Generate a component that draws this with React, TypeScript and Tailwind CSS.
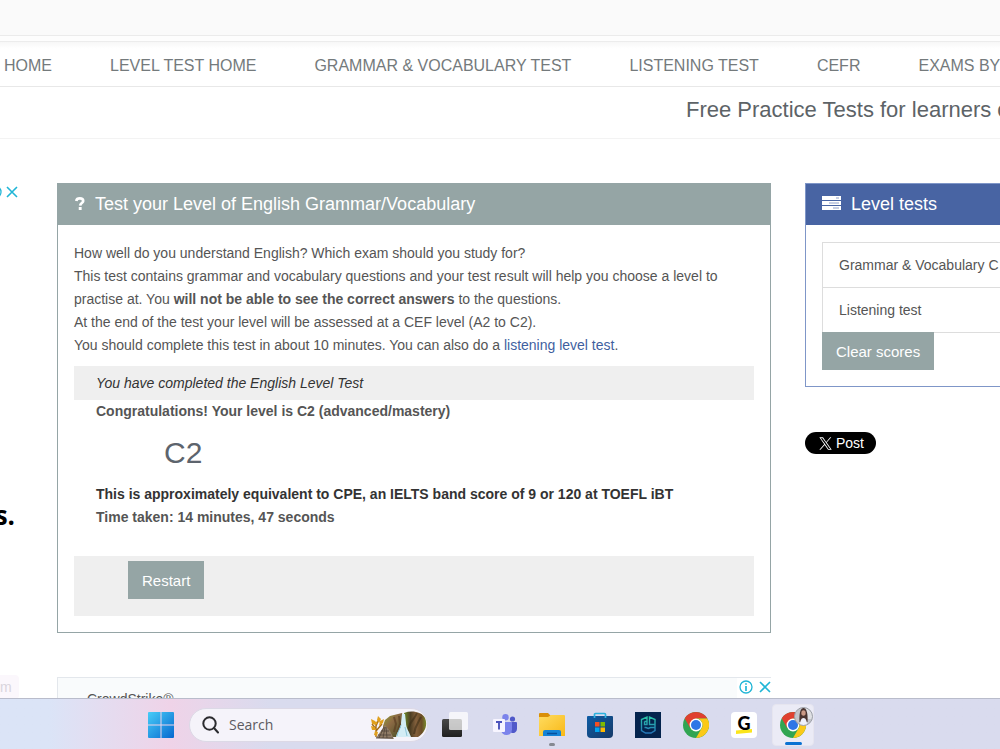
import type { ReactNode } from 'react'

const navItems = [
  'HOME',
  'LEVEL TEST HOME',
  'GRAMMAR & VOCABULARY TEST',
  'LISTENING TEST',
  'CEFR',
  'EXAMS BY',
]

function CloseIcon() {
  return (
    <svg width="12" height="12" viewBox="0 0 12 12" fill="none" stroke="#1fb5d6" strokeWidth="1.6">
      <path d="M1 1l10 10M11 1L1 11" />
    </svg>
  )
}

function InfoIcon() {
  return (
    <svg width="14" height="14" viewBox="0 0 14 14" fill="none" stroke="#1fb5d6">
      <circle cx="7" cy="7" r="6" strokeWidth="1.3" />
      <path d="M7 6v5M7 3.2v1.6" strokeWidth="1.7" />
    </svg>
  )
}

function QuestionIcon() {
  return (
    <svg width="10" height="13" viewBox="0 0 10 13" fill="none" stroke="#fff">
      <path d="M1.3 4C1.5 2.2 3 1.4 4.8 1.4c2 0 3.4 1 3.4 2.5C8.2 6 5.3 6 5.2 8.6" strokeWidth="2.7" />
      <path d="M5.2 10v3" strokeWidth="2.9" />
    </svg>
  )
}

function ServerIcon() {
  return (
    <svg width="19" height="15" viewBox="0 0 19 15">
      <path d="M0 0h19v4H0zM0 5h19v4H0zM0 10h19v4H0z" fill="#fff" />
      <path d="M14 2h3M7 7h10M11 12h6" stroke="#8e9fc9" />
    </svg>
  )
}

function WindowsIcon() {
  return (
    <svg width="26" height="26" viewBox="0 0 26 26">
      <defs>
        <linearGradient id="win" x1="0" y1="0" x2="26" y2="26" gradientUnits="userSpaceOnUse">
          <stop offset="0" stopColor="#48cdf8" />
          <stop offset="1" stopColor="#0668cf" />
        </linearGradient>
      </defs>
      <path
        d="M1 0h11.5v12.5H0V1a1 1 0 0 1 1-1zM13.5 0H25a1 1 0 0 1 1 1v11.5H13.5zM0 13.5h12.5V26H1a1 1 0 0 1-1-1zM13.5 13.5H26V25a1 1 0 0 1-1 1H13.5z"
        fill="url(#win)"
      />
    </svg>
  )
}

function WaterfallArt() {
  return (
    <svg width="56" height="28" viewBox="0 0 56 28">
      <defs>
        <linearGradient id="cliff" x1="0" y1="0" x2="1" y2="0">
          <stop offset="0" stopColor="#6d8f2c" />
          <stop offset=".3" stopColor="#4f3f24" />
          <stop offset=".55" stopColor="#84603c" />
          <stop offset=".8" stopColor="#6a4c26" />
          <stop offset="1" stopColor="#7a8a2e" />
        </linearGradient>
        <linearGradient id="rocks" x1="0" y1="0" x2="1" y2="1">
          <stop offset="0" stopColor="#93a236" />
          <stop offset=".4" stopColor="#8c6a45" />
          <stop offset="1" stopColor="#3f4d20" />
        </linearGradient>
      </defs>
      <path d="M12 15l2-6 5-4 12-3 2 6-2 11-4 7H12z" fill="url(#rocks)" />
      <path d="M23 6l2 7-2 8M28 5l1 8-3 9" stroke="#5b3e24" strokeWidth="2" fill="none" opacity=".7" />
      <path d="M33 2C41-1 51 1 54 7c3 7 0 15-7 19H36l-3-8c-1-6 1-10 0-16z" fill="url(#cliff)" />
      <path d="M46 2c-2 5-5 7-7 11s-2 7-2 10M50 6c-3 6-6 9-7 17" stroke="#3a2b15" strokeWidth="2" fill="none" opacity=".55" />
      <path d="M31 3h3l1 9c0 5 3 8 5 14H25c1-6 6-9 5-14z" fill="#d3edf5" />
      <path d="M30 14c-1 4-3 6-4 11M34 16l2 9" stroke="#8cc4d8" fill="none" />
      <path d="M5 27L14 14l5 6 4 8z" fill="#917c66" />
      <path d="M8 27l5-11M12 27l2-11M16 27l-1-11M7 24h13M10 20h8M5 27h17" stroke="#51453a" fill="none" opacity=".8" />
      <path d="M5 26L5 12M5 18l-4-5M5 20l6-7M5 15l3-7" stroke="#a36a17" strokeWidth="1.4" fill="none" />
      <g fill="#e0a01e">
        <path d="M0 8l4 2 1 4-4-1zM7 5l3 3-2 4-2-3zM9 10l4-2-1 4-4 3zM0 15l4 1 1 3-4 0zM4 20l3 1-1 4-3-1z" />
        <circle cx="5" cy="12" r="1.4" />
      </g>
    </svg>
  )
}

function TaskViewIcon() {
  return (
    <svg width="32" height="26" viewBox="0 0 32 26">
      <defs>
        <linearGradient id="tv" x1="0" y1="0" x2="0" y2="1">
          <stop offset="0" stopColor="#484848" />
          <stop offset="1" stopColor="#202020" />
        </linearGradient>
      </defs>
      <rect x="2" y="7" width="20" height="18" rx="1.5" fill="url(#tv)" />
      <rect x="9" y="0" width="19" height="18" rx="1.5" fill="#fff" opacity=".72" />
    </svg>
  )
}

function TeamsIcon() {
  return (
    <svg width="25" height="22" viewBox="0 0 25 22">
      <circle cx="20.5" cy="5" r="2.6" fill="#5059c9" />
      <circle cx="13.5" cy="3.2" r="3.2" fill="#7b83eb" />
      <path d="M17 8h7a1 1 0 0 1 1 1v6a4 4 0 0 1-6 3.5z" fill="#5059c9" />
      <path d="M9 8h11v7.5a5.5 5.5 0 0 1-11 0z" fill="#7b83eb" />
      <rect x="1" y="5" width="12" height="13" rx="1" fill="#f7f5ff" />
      <path d="M4 8h6M7 8v7.5" stroke="#4b53bc" strokeWidth="1.9" />
    </svg>
  )
}

function FolderIcon() {
  return (
    <svg width="26" height="24" viewBox="0 0 26 24">
      <defs>
        <linearGradient id="folder" x1="0" y1="0" x2="1" y2="1">
          <stop offset="0" stopColor="#ffdc60" />
          <stop offset="1" stopColor="#f8b817" />
        </linearGradient>
      </defs>
      <path d="M1 0h8l3 3h-1v4H0V1a1 1 0 0 1 1-1z" fill="#d98f08" />
      <path d="M0 4h9l3-2h13a1 1 0 0 1 1 1v20H0z" fill="url(#folder)" />
      <path d="M4 23v-4a2 2 0 0 1 2-2h14a2 2 0 0 1 2 2v4z" fill="#1583d6" />
      <path d="M8 20.500h10" stroke="#064f9c" strokeWidth="1.5" />
    </svg>
  )
}

function StoreIcon() {
  return (
    <svg width="26" height="26" viewBox="0 0 26 26">
      <defs>
        <linearGradient id="store" x1="0" y1="0" x2="1" y2="1">
          <stop offset="0" stopColor="#0d5ca5" />
          <stop offset="1" stopColor="#173a68" />
        </linearGradient>
      </defs>
      <path d="M0 5a1 1 0 0 1 1-1h24a1 1 0 0 1 1 1v17a4 4 0 0 1-4 4H4a4 4 0 0 1-4-4z" fill="url(#store)" />
      <path d="M7.5 6V2.500a1 1 0 0 1 1-1h9a1 1 0 0 1 1 1V6" fill="none" stroke="#2bb1dd" strokeWidth="1.7" />
      <path d="M8 10h4.500v4.500H8z" fill="#f25022" />
      <path d="M13.500 10H18v4.500h-4.500z" fill="#7fba00" />
      <path d="M8 15.500h4.500V20H8z" fill="#00a4ef" />
      <path d="M13.500 15.500H18V20h-4.500z" fill="#ffb900" />
    </svg>
  )
}

function ShieldAppIcon() {
  return (
    <svg width="26" height="26" viewBox="0 0 26 26">
      <defs>
        <linearGradient id="mask" x1="0" y1="0" x2="0" y2="26" gradientUnits="userSpaceOnUse">
          <stop offset=".2" stopColor="#2bc4a8" />
          <stop offset=".8" stopColor="#2475b8" />
        </linearGradient>
      </defs>
      <path d="M0 0h26v26H0z" fill="#04234d" />
      <path
        d="M6.500 16.500V7.500L12 5v7.500H9.500V9.500M20 16.500V7.500L14.500 5v7.500H20M9.500 9.500H12M6.500 14v4.500l4 2.500h5.500l4-2.500V14M9.500 15.500h1.500l2.300 1 2.200-1H20"
        fill="none"
        stroke="url(#mask)"
        strokeWidth="1.4"
      />
    </svg>
  )
}

function GIcon() {
  return (
    <span className="relative flex size-[26px] items-center justify-center rounded bg-white font-[Lato,sans-serif] text-lg font-black leading-5 text-black">
      <svg className="absolute bottom-1 left-[5px]" width="16" height="5" viewBox="0 0 16 5">
        <path d="M0 1.500L16 0v3.500L0 5z" fill="#fbe51c" />
      </svg>
      <span className="relative -mt-1">G</span>
    </span>
  )
}

function ChromeIcon() {
  return (
    <svg width="26" height="26" viewBox="0 0 26 26">
      <circle cx="13" cy="13" r="13" fill="#31a552" />
      <path d="M13 0a13 13 0 0 1 11.260 6.500H13L7.370 16.250 1.740 6.500A13 13 0 0 1 13 0z" fill="#e0402f" />
      <path d="M24.260 6.500A13 13 0 0 1 13 26l5.630-9.750A6.500 6.500 0 0 0 13 6.500z" fill="#fbc918" />
      <circle cx="13" cy="13" r="6.400" fill="#fff" />
      <circle cx="13" cy="13" r="5" fill="#2e76e6" />
    </svg>
  )
}

function AvatarBadge() {
  return (
    <svg className="absolute left-[21px] top-0.5" width="19" height="19" viewBox="0 0 19 19">
      <clipPath id="face">
        <circle cx="9.5" cy="9.5" r="9" />
      </clipPath>
      <g clipPath="url(#face)">
        <path d="M0 0h19v19H0z" fill="#c3c5ca" />
        <path d="M12 0h7v12h-7z" fill="#dfe0e3" />
        <path d="M5.500 15C5 8 6 1 9.500 1S14 8 13.500 15z" fill="#4a3530" />
        <ellipse cx="9.500" cy="6" rx="2.200" ry="2.800" fill="#cb9a85" />
        <path d="M6 19c0-5 1-8 3.500-8s3.500 3 3.500 8z" fill="#eef0fa" />
      </g>
      <circle cx="9.5" cy="9.5" r="9" fill="none" stroke="#9da0a8" />
    </svg>
  )
}

function TaskButton({ label, children }: { label: string; children: ReactNode }) {
  return (
    <button aria-label={label} className="relative flex h-[42px] w-12 shrink-0 items-center justify-center">
      {children}
    </button>
  )
}

function Taskbar() {
  return (
    <footer className="flex h-[51px] shrink-0 items-center border-t border-[#b9bccb] bg-linear-to-r from-[#dbe4f7] from-5% via-[#efd3e8] via-17% to-[#d9dbee] to-27% pl-[148px] pt-px">
      <button aria-label="Start" className="shrink-0">
        <WindowsIcon />
      </button>
      <label className="ml-[15px] flex h-[34px] w-[239px] shrink-0 items-center rounded-full border border-[#dcd9e6] bg-[#f5f3fa] pl-3">
        <svg width="17" height="18" viewBox="0 0 17 18" fill="none" stroke="#2b2b2f" strokeWidth="2">
          <circle cx="7.5" cy="7.5" r="6.2" />
          <path d="M12 12l4 4.500" strokeLinecap="round" />
        </svg>
        <input
          aria-label="Search"
          placeholder="Search"
          className="ml-2.5 w-0 min-w-0 flex-1 bg-transparent font-['Open_Sans',sans-serif] text-sm text-[#5c5a61] outline-none placeholder:text-[#5c5a61]"
        />
        <WaterfallArt />
      </label>
      <div className="flex flex-1 items-center pl-1">
        <TaskButton label="Task view">
          <TaskViewIcon />
        </TaskButton>
        <TaskButton label="Teams">
          <TeamsIcon />
        </TaskButton>
        <TaskButton label="File Explorer">
          <FolderIcon />
          <span className="absolute bottom-0 h-[3px] w-1.5 rounded-full bg-[#858992]" />
        </TaskButton>
        <TaskButton label="Store">
          <StoreIcon />
        </TaskButton>
        <TaskButton label="Shield">
          <ShieldAppIcon />
        </TaskButton>
        <TaskButton label="Chrome">
          <ChromeIcon />
        </TaskButton>
        <TaskButton label="G">
          <GIcon />
        </TaskButton>
        <button
          aria-label="Chrome profile"
          className="relative ml-1 flex h-[42px] w-[42px] shrink-0 items-center rounded border border-[#e6e5ef] bg-[#ebebf6] pl-[7px]"
        >
          <ChromeIcon />
          <AvatarBadge />
          <span className="absolute bottom-0 left-3 h-[3px] w-[17px] rounded-full bg-[#0a72d2]" />
        </button>
      </div>
    </footer>
  )
}

function SideAd() {
  return (
    <aside className="flex w-[57px] shrink-0 flex-col overflow-hidden">
      <div className="flex w-[18px] items-center justify-end gap-1 pt-0.5">
        <span className="shrink-0">
          <InfoIcon />
        </span>
        <span className="shrink-0">
          <CloseIcon />
        </span>
      </div>
      <p className="mt-[298px] flex w-[15px] justify-end font-['Open_Sans',sans-serif] text-[26px] font-bold leading-9 text-black">
        s.
      </p>
      <p className="mt-[142px] w-[19px] rounded-r bg-[#fbf7fc] pr-2 text-right text-sm leading-6 text-[#d9d5dc]">m</p>
    </aside>
  )
}

function TestPanel() {
  return (
    <section className="border border-[#95a5a6]">
      <h2 className="flex h-[41px] items-center bg-[#95a5a5] pb-0.5 pl-[17px] text-lg text-white">
        <QuestionIcon />
        <span className="ml-2.5">Test your Level of English Grammar/Vocabulary</span>
      </h2>
      <div className="px-4 pb-4 pt-[17px]">
        <p>How well do you understand English? Which exam should you study for?</p>
        <p>
          This test contains grammar and vocabulary questions and your test result will help you choose a level to
          practise at. You <b>will not be able to see the correct answers</b> to the questions.
        </p>
        <p>At the end of the test your level will be assessed at a CEF level (A2 to C2).</p>
        <p>
          You should complete this test in about 10 minutes. You can also do a{' '}
          <a href="#listening" className="text-[#3f5f9f]">
            listening level test
          </a>
          .
        </p>
        <p className="mt-[9px] bg-[#efefef] px-[22px] py-[5px] leading-6 italic text-[#333]">
          You have completed the English Level Test
        </p>
        <div className="px-[22px] font-bold">
          <p>Congratulations! Your level is C2 (advanced/mastery)</p>
          <p className="pb-3 pl-[68px] pt-3 text-[30px] font-normal leading-9 text-[#5d646d]">C2</p>
          <p className="text-[#333]">This is approximately equivalent to CPE, an IELTS band score of 9 or 120 at TOEFL iBT</p>
          <p>Time taken: 14 minutes, 47 seconds</p>
        </div>
        <div className="mt-[27px] h-[60px] bg-[#efefef] pl-[54px] pt-[5px]">
          <button className="h-[38px] bg-[#95a5a5] px-3.5 text-[15px] text-white">Restart</button>
        </div>
      </div>
    </section>
  )
}

function LevelTests() {
  return (
    <section className="border border-r-0 border-[#7f96c8]">
      <h2 className="flex h-[41px] items-center bg-[#4864a3] pb-0.5 pl-4 text-lg text-white">
        <ServerIcon />
        <span className="ml-2.5">Level tests</span>
      </h2>
      <div className="pb-4 pl-4 pt-[17px]">
        <ul className="overflow-hidden whitespace-nowrap border-l border-t border-[#dddddd]">
          <li className="flex h-[45px] items-center border-b border-[#dddddd] pl-4">
            <a href="#grammar">Grammar &amp; Vocabulary C</a>
          </li>
          <li className="flex h-[45px] items-center border-b border-[#dddddd] pl-4">
            <a href="#listening">Listening test</a>
          </li>
        </ul>
        <button className="-mt-px block h-[38px] bg-[#95a5a5] px-3.5 text-[15px] text-white">Clear scores</button>
      </div>
    </section>
  )
}

export default function App() {
  return (
    <div className="flex h-screen flex-col overflow-hidden bg-white font-['Liberation_Sans',Arial,sans-serif] text-sm leading-[23px] text-[#555]">
      <div className="h-9 shrink-0 border-b border-[#ebebeb] bg-[#fafafa]" />
      <div className="h-1.5 shrink-0 border-b border-[#ececec] bg-[#fdfdfd]" />
      <nav className="flex h-[45px] shrink-0 items-center gap-[58px] overflow-hidden whitespace-nowrap border-b border-[#e8e8e8] bg-linear-to-b from-[#f7f7f7] to-white to-15% pl-1 pt-[3px] text-base text-[#747a7c]">
        {navItems.map((item) => (
          <a key={item} href="#top" className="shrink-0">
            {item}
          </a>
        ))}
      </nav>
      <header className="flex h-[52px] shrink-0 justify-end overflow-hidden whitespace-nowrap border-b border-[#f3f3f3] pt-[11px]">
        <h1 className="w-[314px] text-[22px] text-[#5d6367]">Free Practice Tests for learners o</h1>
      </header>
      <main className="flex min-h-0 flex-1 overflow-hidden pt-11">
        <SideAd />
        <div className="min-w-0 flex-1">
          <TestPanel />
          <div className="mt-11 flex h-10 items-start justify-between border border-r-0 border-[#e3e7ec] bg-[#f9fbfc] pl-[29px]">
            <p className="pt-2.5 text-[#555]">CrowdStrike®</p>
            <span className="flex items-center gap-1.5 bg-white pb-1 pl-0.5 pt-0.5">
              <InfoIcon />
              <CloseIcon />
            </span>
          </div>
        </div>
        <aside className="ml-[34px] w-[195px] shrink-0">
          <LevelTests />
          <button className="mt-[45px] flex h-[22px] items-center gap-1 rounded-full bg-black pl-3.5 pr-3 text-sm text-white">
            <svg width="13" height="13" viewBox="0 0 24 24" fill="#fff">
              <path d="M14.2 10.300L22.700.5h-2l-7.400 8.500L7.400.5H.6l9 12.900-9 10.300h2.100l7.800-9 6.200 9h6.800zM11.500 13.400l-.9-1.300L3.400 2.100h3.100l5.800 8.200.9 1.300 7.500 10.600h-3.100z" />
            </svg>
            Post
          </button>
        </aside>
      </main>
      <Taskbar />
    </div>
  )
}
